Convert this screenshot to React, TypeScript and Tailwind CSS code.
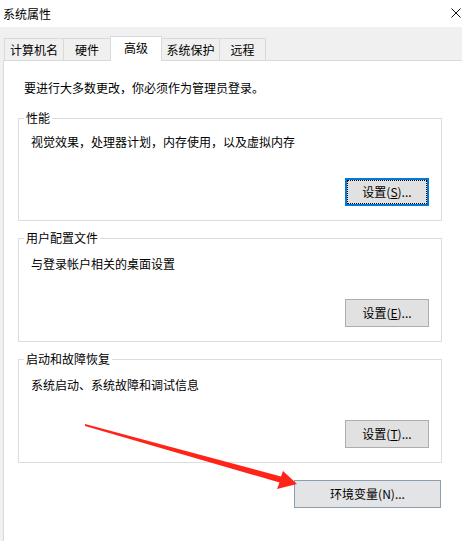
import React from "react";

type Group = {
  title: string;
  text: string;
  key: string;
  pt: string;
  inner: string;
  focused?: boolean;
};

const groups: Group[] = [
  { title: "性能", text: "视觉效果，处理器计划，内存使用，以及虚拟内存", key: "S", pt: "pt-[15px]", inner: "h-[59px]", focused: true },
  { title: "用户配置文件", text: "与登录帐户相关的桌面设置", key: "E", pt: "pt-[17px]", inner: "h-[60px]" },
  { title: "启动和故障恢复", text: "系统启动、系统故障和调试信息", key: "T", pt: "pt-[17px]", inner: "h-[60px]" },
];

const tabs = [
  { label: "计算机名", cls: "w-[59px] h-[22px] border-t border-l" },
  { label: "硬件", cls: "w-[47px] h-[22px] border-t border-l" },
  { label: "高级", cls: "w-[52px] h-[25px] -mb-px border-t border-l border-r bg-white relative z-10 pb-[3px]" },
  { label: "系统保护", cls: "w-[57px] h-[22px] border-t" },
  { label: "远程", cls: "w-[47px] h-[22px] border-t border-l border-r" },
];

function SetButton({ k, focused }: { k: string; focused?: boolean }) {
  if (focused) {
    return (
      <button className="w-[84px] h-[28px] border-2 border-[#0078d7] bg-[#e1e1e1] p-0">
        <span className="flex h-full w-full items-center justify-center border border-dotted border-black">
          设置(<span className="underline">{k}</span>)...
        </span>
      </button>
    );
  }
  return (
    <button className="flex w-[84px] h-[28px] items-center justify-center border border-[#adadad] bg-[#e1e1e1]">
      设置(<span className="underline">{k}</span>)...
    </button>
  );
}

export default function App() {
  return (
    <div
      className="relative flex h-[541px] w-[462px] flex-col overflow-hidden bg-[#f0f0f0] text-[12px] leading-[16px] text-black"
      style={{ fontFamily: '"Noto Sans CJK SC", "Noto Sans", sans-serif' }}
    >
      {/* title bar */}
      <div className="flex h-[27px] shrink-0 items-center justify-between bg-white pl-[3px] pr-[1px]">
        <span>系统属性</span>
        <svg width="10" height="10" viewBox="0 0 10 10" className="mb-[2px]">
          <path d="M0.5 0.5 L9.5 9.5 M9.5 0.5 L0.5 9.5" stroke="#111" strokeWidth="1" />
        </svg>
      </div>

      {/* tabs */}
      <div className="flex h-[33px] shrink-0 items-end pl-[4px]">
        {tabs.map((t) => (
          <div
            key={t.label}
            className={`flex items-center justify-center border-[#d9d9d9] ${t.cls}`}
          >
            {t.label}
          </div>
        ))}
      </div>

      {/* panel */}
      <div className="ml-[3px] w-[480px] flex-1 border-l border-t border-[#d9d9d9] bg-white">
        <div className="w-[438px] pl-[14px] pt-[19px]">
          <p className="pl-[6px]">要进行大多数更改，你必须作为管理员登录。</p>

          <div className="mt-[22px] flex w-[424px] flex-col gap-[17px]">
            {groups.map((g) => (
              <div key={g.title} className="relative border border-[#dcdcdc] pb-[14px] pr-[12px]">
                <span className="absolute left-[5px] top-[-9px] bg-white px-[2px]">{g.title}</span>
                <div className={`${g.inner} ${g.pt} pl-[12px]`}>{g.text}</div>
                <div className="flex justify-end">
                  <SetButton k={g.key} focused={g.focused} />
                </div>
              </div>
            ))}
          </div>

          <div className="mt-[17px] flex w-[423px] justify-end">
            <button className="flex h-[28px] w-[147px] items-center justify-center border border-[#8a9db1] bg-[#e3e4e6]">
              环境变量(N)...
            </button>
          </div>
        </div>
      </div>

      {/* annotation arrow */}
      <svg className="pointer-events-none absolute left-0 top-0" width="462" height="541">
        <polygon
          points="85,424 281,476.5 283,471 297,484 277,489 279.5,482.5 85,426"
          fill="#ff2418"
        />
      </svg>
    </div>
  );
}
